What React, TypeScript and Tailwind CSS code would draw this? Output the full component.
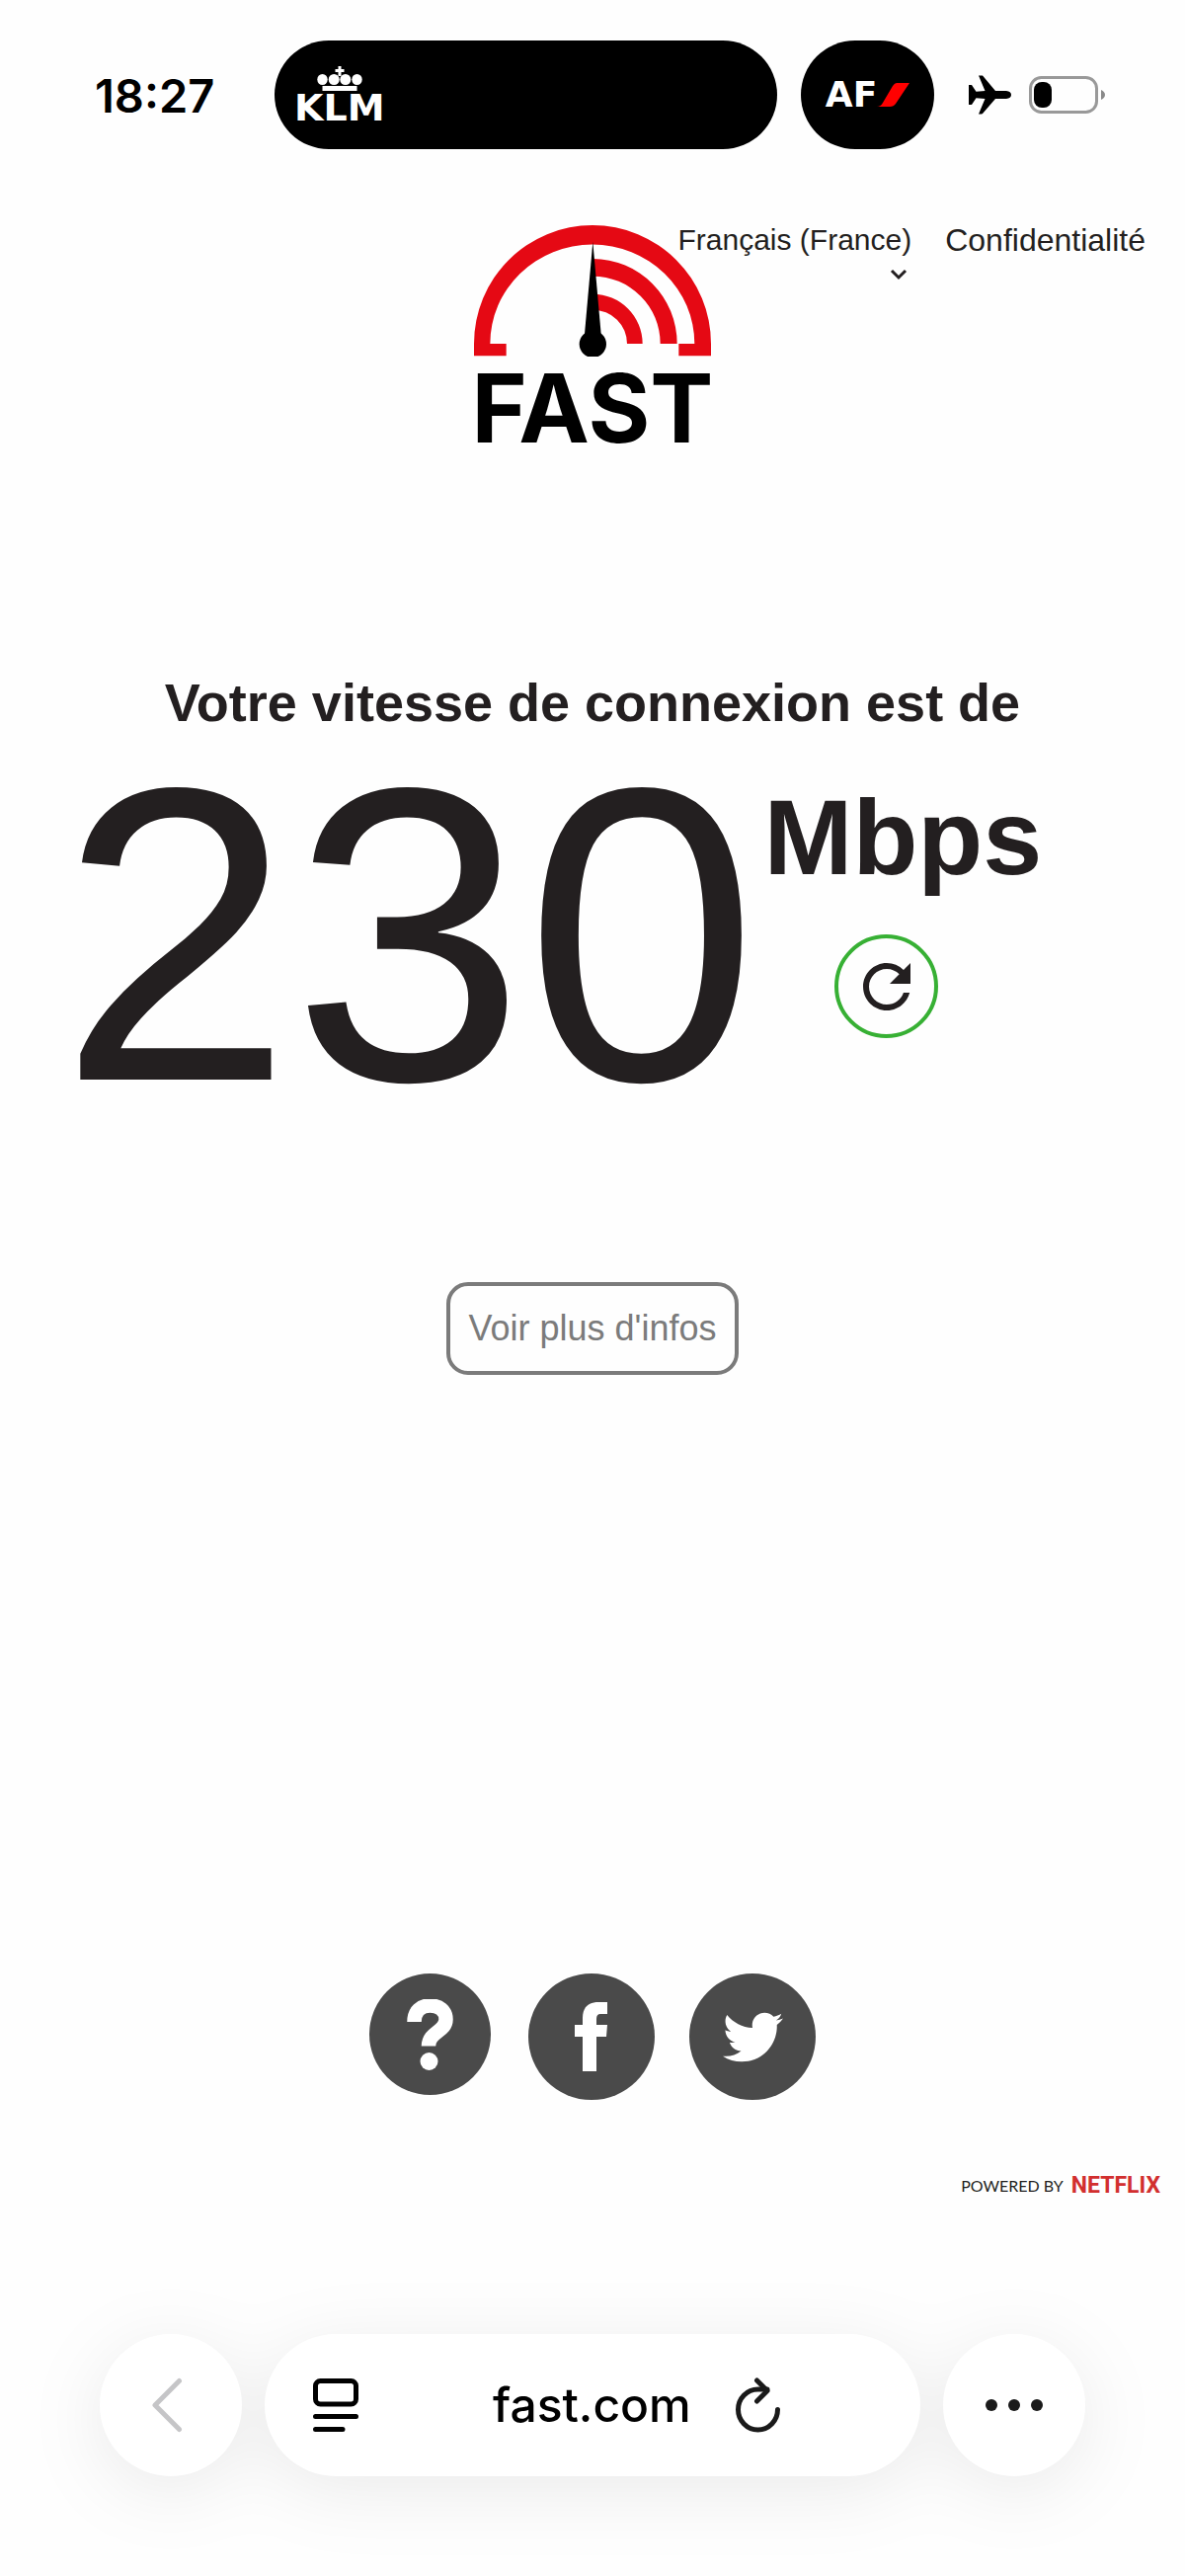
import { FaTwitter } from "react-icons/fa";
import { MdRefresh } from "react-icons/md";

const StatusBar = () => {
  return (
    <div className="mt-[41px] flex h-[110px] flex-row items-center pl-[96px] pr-[81px]">
      <span className="w-[182px] font-['Inter',sans-serif] text-[47px] font-semibold leading-none text-black">
        18:27
      </span>
      <div className="flex h-full flex-1 items-center rounded-[55px] bg-black px-5 text-white">
        <div className="flex flex-col items-center">
          <svg width="46" height="26" viewBox="0 0 46 26" fill="currentColor">
            <path d="M21.500 0h3v3h3v3h-3v4h-3V6h-3V3h3z" />
            <ellipse cx="5.500" cy="13.500" rx="5.200" ry="5.500" />
            <ellipse cx="17.200" cy="13.500" rx="5.500" ry="5.500" />
            <ellipse cx="28.800" cy="13.500" rx="5.500" ry="5.500" />
            <ellipse cx="40.500" cy="13.500" rx="5.200" ry="5.500" />
            <rect x="5.500" y="20" width="35" height="5" />
          </svg>
          <span className="font-['DejaVu_Sans',sans-serif] text-[38px] font-bold leading-8">
            KLM
          </span>
        </div>
      </div>
      <div className="ml-6 flex h-full w-[135px] items-center justify-center rounded-[55px] bg-black text-white">
        <span className="font-['DejaVu_Sans',sans-serif] text-[36px] font-bold leading-none">
          AF
        </span>
        <svg width="33" height="24" viewBox="0 0 33 24">
          <path d="M20 0h13L19 21q-2 3-6 3H0q4 0 6-4L16 3q2-3 4-3z" fill="#ff0000" />
        </svg>
      </div>
      <svg className="ml-[35px]" width="43" height="40" viewBox="0 0 43 40">
        <path
          d="M10 0.500h4L27 16h11q5 .5 5 4t-5 4H27L14 39q-1 .8-4 .5l6.500-15.500-9-.7L3 30H0V10h3l4.500 6.700 9-.7z"
          fill="#000"
        />
      </svg>
      <svg className="ml-[18px]" width="77" height="38" viewBox="0 0 77 38">
        <rect x="1.500" y="1.500" width="67" height="35" rx="11" fill="none" stroke="#999" strokeWidth="3" />
        <rect x="5" y="6" width="18" height="26" rx="8" fill="#000" />
        <path d="M73 14q4 2 4 5t-4 5z" fill="#8a8a8a" />
      </svg>
    </div>
  );
};

const Logo = () => {
  return (
    <a href="#" className="flex w-[240px] flex-col items-center text-black">
      <svg className="w-full" viewBox="60 53 720 400">
        <g fill="#e50914">
          <path d="M60 450V413A360 360 0 0 1 780 413V450H682V413H730A310 301 0 0 0 109 413H158V450Z" />
          <path d="M421 155A256 258 0 0 1 677 413H626A205 205 0 0 0 421 208Z" />
          <path d="M421 262A151 151 0 0 1 572 413H525A104 103 0 0 0 421 310Z" />
        </g>
        <path d="M421 103L446 384H396Z" />
        <circle cx="421" cy="414" r="41" />
      </svg>
      <span className="font-['Inter',sans-serif] text-[96px] font-bold leading-[104px]">FAST</span>
    </a>
  );
};

const Socials = () => {
  return (
    <div className="mt-[606px] flex flex-row items-start justify-center text-white">
      <button
        aria-label="Aide"
        className="flex size-[123px] items-center justify-center rounded-full bg-[#4a4a4a]"
      >
        <svg width="48" height="72" viewBox="0 0 48 72">
          <path
            d="M7.500 23C7.500 12 14 6.500 23.500 6.500S39.500 12 39.500 20.500C39.500 33 22 33 22 47.500"
            fill="none"
            stroke="currentColor"
            strokeWidth="14.500"
          />
          <circle cx="22.500" cy="63" r="9" fill="currentColor" />
        </svg>
      </button>
      <a
        href="#"
        aria-label="Facebook"
        className="ml-[38px] flex size-32 items-center justify-center rounded-full bg-[#4a4a4a]"
      >
        <svg width="34" height="70" viewBox="0 0 34 70" fill="currentColor">
          <path d="M8 70V35H0V23H8V16C8 5 14 0 24 0H33V12H26Q22 12 22 17V23H33L32 35H22V70Z" />
        </svg>
      </a>
      <a
        href="#"
        aria-label="Twitter"
        className="ml-[35px] flex size-32 items-center justify-center rounded-full bg-[#4a4a4a]"
      >
        <FaTwitter size={61} />
      </a>
    </div>
  );
};

const BrowserBar = () => {
  return (
    <div className="mb-[100px] mt-[137px] flex h-36 flex-row items-center gap-[23px] px-[101px] drop-shadow-[0_14px_36px_rgba(0,0,0,0.08)]">
      <button
        aria-label="Retour"
        className="flex size-36 items-center justify-center rounded-full bg-white pr-2"
      >
        <svg width="32" height="56" viewBox="0 0 32 56" fill="none" stroke="#c5c5c7" strokeWidth="5" strokeLinecap="round" strokeLinejoin="round">
          <path d="M28.500 3.500L4 28L28.500 52.500" />
        </svg>
      </button>
      <div className="flex h-full flex-1 items-center rounded-full bg-white">
        <button aria-label="Lecteur" className="ml-[49px]">
          <svg width="46" height="54" viewBox="0 0 46 54" fill="none" stroke="#000" strokeWidth="5" strokeLinecap="round">
            <rect x="2.500" y="2.500" width="41" height="23.500" rx="5" />
            <path d="M2.500 38.500H43.500M2.500 51.500H30" />
          </svg>
        </button>
        <span className="ml-[136px] font-['Inter',sans-serif] text-[48px] font-medium leading-none text-black">
          fast.com
        </span>
        <button aria-label="Actualiser" className="ml-[45px]">
          <svg width="46" height="56" viewBox="0 0 46 56" fill="none" stroke="#1a1a1a" strokeWidth="5" strokeLinecap="round" strokeLinejoin="round">
            <path d="M42.500 32.500A20 20.500 0 1 1 22.500 12H32" />
            <path d="M21.500 3L32 13.500L21.500 24" />
          </svg>
        </button>
      </div>
      <button
        aria-label="Plus"
        className="flex size-36 items-center justify-center gap-[11px] rounded-full bg-white"
      >
        <span className="size-3 rounded-full bg-[#1a1a1a]" />
        <span className="size-3 rounded-full bg-[#1a1a1a]" />
        <span className="size-3 rounded-full bg-[#1a1a1a]" />
      </button>
    </div>
  );
};

const App = () => {
  return (
    <div className="flex min-h-screen flex-col overflow-hidden bg-[#fefefe] font-['Liberation_Sans',Arial,sans-serif] text-[#231f20]">
      <StatusBar />
      <header className="relative mt-[77px] flex justify-center">
        <Logo />
        {/* the language menu runs over the edge of the logo */}
        <nav className="absolute right-10 top-0 flex flex-row items-start gap-[34px]">
          <button className="flex flex-col items-end text-[30px] leading-[30px]">
            Français (France)
            <svg className="mr-1 mt-3.5" width="18" height="12" viewBox="0 0 18 12" fill="none" stroke="currentColor" strokeWidth="3">
              <path d="M2 2L9 9L16 2" />
            </svg>
          </button>
          <a href="#" className="text-[32px] leading-[30px]">
            Confidentialité
          </a>
        </nav>
      </header>
      <main>
        <h1 className="mt-[214px] text-center text-[54px] font-bold leading-[64px]">
          Votre vitesse de connexion est de
        </h1>
        <div className="mt-[33px] flex flex-row items-start pl-[60px]">
          <span className="text-[424px] leading-[340px]">230</span>
          <div className="ml-1.5 flex flex-col items-start pt-[18px]">
            <span className="text-[108px] font-bold leading-none">Mbps</span>
            <button
              aria-label="Relancer le test"
              className="ml-[72px] mt-11 flex size-[105px] items-center justify-center rounded-full border-4 border-[#37b034]"
            >
              <MdRefresh size={72} />
            </button>
          </div>
        </div>
        <div className="mt-[182px] flex justify-center">
          <button className="h-[94px] rounded-[22px] border-4 border-[#7b7b7b] px-[18px] text-[36px] leading-none text-[#7b7b7b]">
            Voir plus d'infos
          </button>
        </div>
      </main>
      <footer>
        <Socials />
        <div className="mt-[74px] flex flex-row items-center justify-end gap-2 pr-[25px] leading-[26px]">
          <span className="font-['Lato',sans-serif] text-[16px]">POWERED BY</span>
          <span className="font-['Roboto',sans-serif] text-[23px] font-bold text-[#d22f2f]">
            NETFLIX
          </span>
        </div>
      </footer>
      <BrowserBar />
    </div>
  );
};

export default App;
